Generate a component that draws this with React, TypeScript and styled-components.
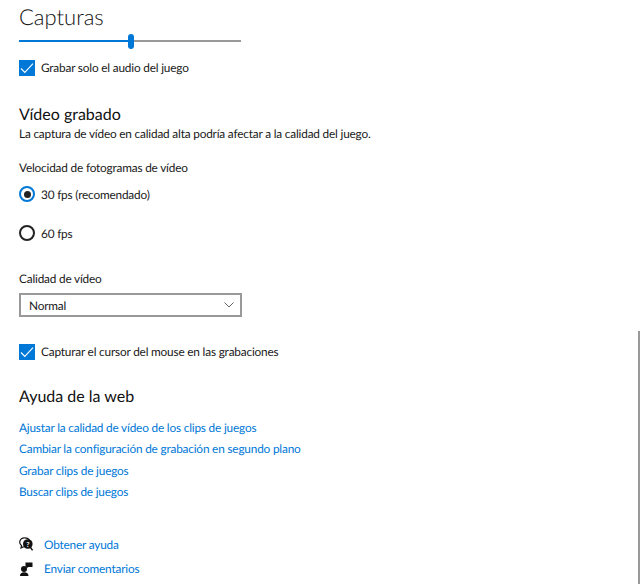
import React from 'react';
import styled, { createGlobalStyle } from 'styled-components';

const GlobalStyle = createGlobalStyle`
  html, body {
    margin: 0;
    background: #fff;
    overflow: hidden;
  }
  body {
    font-family: Lato, Roboto, 'Liberation Sans', sans-serif;
    font-size: 11.8px;
    letter-spacing: -0.18px;
    color: #1a1a1a;
    text-rendering: geometricPrecision;
  }
`;

const Page = styled.div`
  position: relative;
  width: 640px;
  height: 587px;
  overflow: hidden;
  padding: 3px 0 0 19px;
  box-sizing: border-box;
`;

const Title = styled.h1`
  margin: 0;
  font-size: 22px;
  font-weight: 300;
  letter-spacing: 0;
  line-height: 28px;
  color: #111;
`;

const SliderTrack = styled.div`
  position: relative;
  width: 222px;
  height: 2px;
  margin-top: 9px;
  background: linear-gradient(to right, #0078d7 49%, #999 49%);
`;

const SliderThumb = styled.div`
  position: absolute;
  left: 109px;
  top: -6px;
  width: 6px;
  height: 15px;
  border-radius: 3px;
  background: #0078d7;
`;

const CheckRow = styled.div<{ $top: number }>`
  display: flex;
  align-items: center;
  gap: 6px;
  height: 17px;
  margin-top: ${(p) => p.$top}px;
`;

const CheckBox = styled.div`
  width: 16px;
  height: 16px;
  background: #0078d7;
  display: flex;
  align-items: center;
  justify-content: center;
`;

const Heading = styled.h2<{ $top: number }>`
  margin: ${(p) => p.$top}px 0 0;
  font-size: 16px;
  font-weight: 400;
  letter-spacing: 0;
  line-height: 20px;
  color: #111;
`;

const Text = styled.div<{ $top: number }>`
  margin-top: ${(p) => p.$top}px;
  line-height: 16px;
`;

const RadioRow = styled.div<{ $top: number }>`
  display: flex;
  align-items: center;
  gap: 6px;
  height: 16px;
  margin-top: ${(p) => p.$top}px;
`;

const Radio = styled.div<{ $on?: boolean }>`
  width: 16px;
  height: 16px;
  box-sizing: border-box;
  border-radius: 50%;
  border: 2px solid ${(p) => (p.$on ? '#0078d7' : '#222')};
  display: flex;
  align-items: center;
  justify-content: center;
  &::after {
    content: '';
    display: ${(p) => (p.$on ? 'block' : 'none')};
    width: 7px;
    height: 7px;
    border-radius: 50%;
    background: #222;
  }
`;

const Select = styled.div`
  width: 223px;
  height: 24px;
  margin-top: 6px;
  box-sizing: border-box;
  border: 2px solid #999;
  padding: 0 6px 0 8px;
  display: flex;
  align-items: center;
  justify-content: space-between;
`;

const Links = styled.div`
  display: flex;
  flex-direction: column;
  gap: 5.4px;
  margin-top: 13px;
`;

const Link = styled.a`
  color: #0078d7;
  line-height: 16px;
  text-decoration: none;
`;

const HelpList = styled.div`
  display: flex;
  flex-direction: column;
  gap: 8px;
  margin-top: 37px;
`;

const HelpRow = styled.div`
  display: flex;
  align-items: center;
  gap: 9px;
  height: 16px;
`;

const ScrollBar = styled.div`
  position: absolute;
  right: 0;
  top: 331px;
  width: 2px;
  height: 253px;
  background: #999;
`;

const Check = () => (
  <svg width="14" height="12" viewBox="0 0 14 12" fill="none" stroke="#fff" strokeWidth="1.1">
    <path d="M1 6.5 L4.8 10.4 L13 1.6" />
  </svg>
);

const links = [
  'Ajustar la calidad de vídeo de los clips de juegos',
  'Cambiar la configuración de grabación en segundo plano',
  'Grabar clips de juegos',
  'Buscar clips de juegos',
];

const App = () => (
  <Page>
    <GlobalStyle />
    <Title>Capturas</Title>
    <SliderTrack>
      <SliderThumb />
    </SliderTrack>
    <CheckRow $top={17}>
      <CheckBox><Check /></CheckBox>
      <span>Grabar solo el audio del juego</span>
    </CheckRow>
    <Heading $top={29}>Vídeo grabado</Heading>
    <Text $top={1}>La captura de vídeo en calidad alta podría afectar a la calidad del juego.</Text>
    <Text $top={18}>Velocidad de fotogramas de vídeo</Text>
    <RadioRow $top={10}>
      <Radio $on />
      <span>30 fps (recomendado)</span>
    </RadioRow>
    <RadioRow $top={23}>
      <Radio />
      <span>60 fps</span>
    </RadioRow>
    <Text $top={30}>Calidad de vídeo</Text>
    <Select>
      <span>Normal</span>
      <svg width="10" height="6" viewBox="0 0 10 6" fill="none" stroke="#666" strokeWidth="1">
        <path d="M0.5 0.5 L5 5 L9.5 0.5" />
      </svg>
    </Select>
    <CheckRow $top={26}>
      <CheckBox><Check /></CheckBox>
      <span>Capturar el cursor del mouse en las grabaciones</span>
    </CheckRow>
    <Heading $top={27}>Ayuda de la web</Heading>
    <Links>
      {links.map((text) => (
        <Link key={text}>{text}</Link>
      ))}
    </Links>
    <HelpList>
      <HelpRow>
        <svg width="16" height="16" viewBox="0 0 16 16">
          <path d="M5.8 0.8 C3 0.8 0.7 2.7 0.7 5.2 C0.7 6.6 1.4 7.8 2.5 8.6 L2 11 L4.8 9.6" fill="none" stroke="#111" strokeWidth="1.2" />
          <path d="M5.8 0.8 C7.8 0.8 9.5 1.5 10.5 2.8" fill="none" stroke="#111" strokeWidth="1.2" />
          <circle cx="8.8" cy="7" r="4.8" fill="#111" />
          <path d="M11.5 10.5 L13.6 13.4" stroke="#111" strokeWidth="1.4" />
          <text x="8.8" y="9.6" fontSize="7" fontWeight="700" textAnchor="middle" fill="#fff">?</text>
        </svg>
        <Link>Obtener ayuda</Link>
      </HelpRow>
      <HelpRow>
        <svg width="16" height="16" viewBox="0 0 16 16" fill="#111">
          <circle cx="5" cy="8" r="3" />
          <path d="M1 15 C1 12.4 2.5 11.2 5.2 11.2 C7.9 11.2 9.5 12.4 9.5 15Z" />
          <path d="M6.5 1.5 H13.5 V6 H9.5 L6.8 7.8 L7.6 6 H6.5Z" />
        </svg>
        <Link>Enviar comentarios</Link>
      </HelpRow>
    </HelpList>
    <ScrollBar />
  </Page>
);

export default App;
